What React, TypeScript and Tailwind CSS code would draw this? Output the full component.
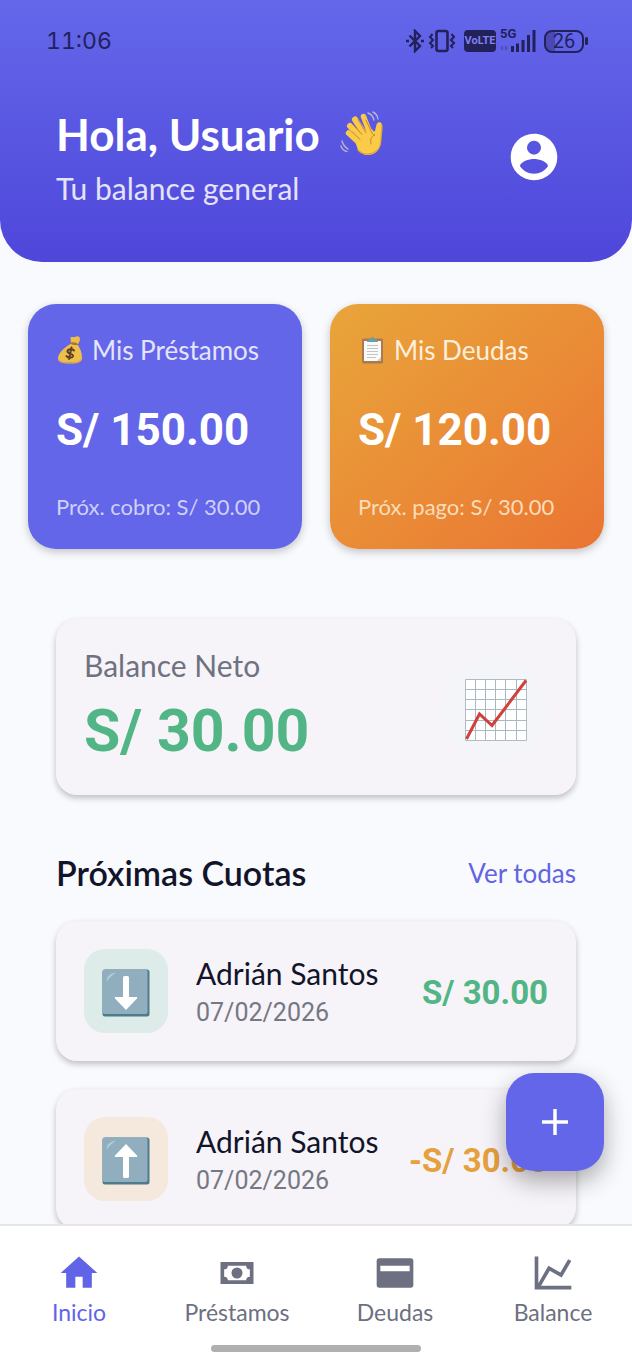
import React, { useState } from 'react';

type IconProps = { className?: string };

const TEXT = "font-['Lato','Open_Sans',sans-serif]";
const NUM = "font-['Roboto','Liberation_Sans',sans-serif]";

const WaveEmoji: React.FC<IconProps> = ({ className }) => (
  <svg viewBox="0 0 44 46" className={className} aria-hidden="true" fill="none" strokeLinecap="round">
    <g stroke="#f9cb46">
      <path d="M10 15l13 14" strokeWidth="6" />
      <path d="M8.500 22l13 12" strokeWidth="5.500" />
      <path d="M15 8.500l12 18" strokeWidth="6" />
      <path d="M23.500 5.500l7 18" strokeWidth="5.500" />
    </g>
    <path d="M14 27l7-6 11-3c1 2 2 3 3 2 1-3 1-7 3-8.500 2-1 4 0 4 3 0 5-1 9-1 14 0 9-5 15-12 15.500-5 .4-8-2-11-5z" fill="#f9cb46" />
    <path d="M13 13.500l9 10M18 8.500l8 13M12 20.500l8 8M26 9l5 11c1.500 3 2 4 4 4-4 1-5 5-4 9" stroke="#c9853a" strokeWidth="1" />
    <path d="M42 15c0 6-1 8-1 13 0 9-5 14-12 15-4 .5-8-1-11-4" stroke="#e2a23c" strokeWidth="1.300" />
    <g stroke="#b5b5cf" strokeWidth="1.400">
      <path d="M28 2c3 1 5 3 6 7M33 1c3 1.500 4.500 4 5 7M2 30c1 4 3 6 6 8M1 35c1 3 3 5 6 5.500" />
    </g>
  </svg>
);

const MoneyBagEmoji: React.FC<IconProps> = ({ className }) => (
  <svg viewBox="0 0 28 28" className={className} aria-hidden="true" fill="none">
    <path d="M14.500 1.500c2-1.200 3 .2 4.500-.6 1.500-.7 3-.8 4.300.2.800.700.300 1.700.6 2.600.200 1-.700 1.500-.9 2.500L22 8.500l-7-1.300z" fill="#efbd45" />
    <path d="M14.500 8C9 11 2 17 2 22.500 2 26 5 27.500 14 27.500s12-1.500 12-5.500c0-5-1.500-9-4.500-13.500z" fill="#efbf4c" />
    <path d="M14 7c2-1.200 6.500-.8 8.500 1.500-2 1-6.500.7-8.500-1.500z" fill="#a8742d" />
    <path d="M3 23.500c1 2.500 5 3 11 3s10.500-.6 11.500-3.500" stroke="#d9a23a" strokeWidth="1" />
    <path d="M18 14.500c-1.200-1.400-5.800-1.800-6.600.5-.8 2.700 6.300 2.500 5.600 5.300-.7 2.200-5 1.700-6.500-.2M15.500 11.500l-2.500 11.500" stroke="#5c4026" strokeWidth="2" strokeLinecap="round" />
  </svg>
);

const ClipboardEmoji: React.FC<IconProps> = ({ className }) => (
  <svg viewBox="0 0 28 28" className={className} aria-hidden="true">
    <rect x="4" y="2.500" width="21" height="25" rx="1.500" fill="#a97a50" />
    <path d="M6 5h17v20H6z" fill="#fafafa" />
    <path d="M19 25l4-4v4z" fill="#c9c9c9" />
    <path d="M9 9.500h11M9 12.500h11M9 15.500h11M9 18.500h11M9 21.500h9" stroke="#c4c4c4" strokeWidth="1" />
    <path d="M9 6c0-2 1.500-3 3.500-3a2 2 0 0 1 4 0c2 0 3.500 1 3.500 3z" fill="#6c9fa5" />
  </svg>
);

const ChartEmoji: React.FC<IconProps> = ({ className }) => (
  <svg viewBox="0 0 62 62" className={className} aria-hidden="true">
    <path d="M.5.5h61v61H.5z" fill="#fff" stroke="#aebcc4" />
    <path d="M10.500 1v60M20.500 1v60M30.500 1v60M40.500 1v60M51.500 1v60M1 10.500h60M1 20.500h60M1 30.500h60M1 41.500h60M1 51.500h60" stroke="#a9b9c2" strokeWidth="1" />
    <path d="M1.500 60L14.500 35 27 46.500 61 1.500" fill="none" stroke="#cf413a" strokeWidth="3" />
  </svg>
);

const ArrowEmoji: React.FC<IconProps & { up?: boolean }> = ({ className, up }) => (
  <svg viewBox="0 0 48 48" className={className} aria-hidden="true">
    <rect x=".5" y=".5" width="47" height="47" rx="2.500" fill="#4f7c8c" />
    <rect x=".5" y=".5" width="45" height="44.500" rx="2" fill="#90aebd" />
    <path d="M4.500 13c0-5 3-8.500 9.500-9.500-4 3-7 5-9.500 9.500z" fill="#b5d0dc" />
    <path
      d={up ? 'M24 7l11 11.500c.6.800.200 1.500-.7 1.500H27v19.500a1.500 1.500 0 0 1-1.500 1.500h-3a1.500 1.500 0 0 1-1.500-1.500V20h-7.300c-.9 0-1.300-.7-.7-1.500z' : 'M24 41l11-11.500c.6-.8.200-1.500-.7-1.500H27V8.500A1.500 1.500 0 0 0 25.500 7h-3A1.500 1.500 0 0 0 21 8.500V28h-7.300c-.9 0-1.300.7-.7 1.500z'}
      fill="#fff"
    />
  </svg>
);

const StatusIcons: React.FC = () => (
  <div className="flex items-center gap-2 text-[#22215a]">
    <svg viewBox="0 0 18 24" className="h-6 w-[18px]" fill="none" stroke="currentColor" strokeWidth="2.400" aria-hidden="true">
      <path d="M3.500 6.500L14 17l-5 5V2l5 5L3.500 17.500" />
      <path d="M0 12h3M15 12h3" strokeWidth="2.600" />
    </svg>
    <svg viewBox="0 0 28 24" className="-ml-1 h-6 w-7" fill="none" stroke="currentColor" strokeWidth="2.600" aria-hidden="true">
      <rect x="8.500" y="2" width="11" height="20" rx="2" />
      <path d="M4.500 5L2 8l3 3-3 3 3 3-2 2M23.500 5L26 8l-3 3 3 3-3 3 2 2" strokeWidth="2" />
    </svg>
    <span className={`${NUM} -mr-1 flex h-[22px] w-8 items-center justify-center rounded-sm bg-[#22215a] text-[11px] font-bold text-[#8080f0]`}>VoLTE</span>
    <div className="relative h-6 w-9">
      <span className={`${NUM} absolute -top-1 left-0 text-[13px] leading-[18px] font-bold`}>5G</span>
      <svg viewBox="0 0 36 24" className="h-6 w-9" aria-hidden="true">
        <path d="M11 17h3v6h-3zM16 14.500h3V23h-3zM21.500 11h3v12h-3zM27 6h3v17h-3zM32.500 1h3v22h-3z" fill="currentColor" />
        <path d="M0 19l3-3v6zM8 19l-3-3v6z" fill="currentColor" opacity=".3" />
      </svg>
    </div>
    <div className="flex items-center gap-px">
      <span className={`${NUM} flex h-[23px] w-10 items-center justify-center rounded-lg border-2 border-[#22215a] bg-linear-to-r from-[#4a49b4] from-25% to-transparent to-25% text-[20px]`}>26</span>
      <span className="h-2 w-[3px] rounded-sm bg-[#22215a]" />
    </div>
  </div>
);

const PATHS = {
  account: 'M12,19.2C9.5,19.2 7.29,17.92 6,16C6.03,14 10,12.9 12,12.9C14,12.9 17.97,14 18,16C16.71,17.92 14.5,19.2 12,19.2M12,5A3,3 0 0,1 15,8A3,3 0 0,1 12,11A3,3 0 0,1 9,8A3,3 0 0,1 12,5M12,2A10,10 0 0,0 2,12A10,10 0 0,0 12,22A10,10 0 0,0 22,12C22,6.47 17.5,2 12,2Z',
  home: 'M10,20V14H14V20H19V12H22L12,3L2,12H5V20H10Z',
  cash: 'M3,6H21V18H3V6M12,9A3,3 0 0,1 15,12A3,3 0 0,1 12,15A3,3 0 0,1 9,12A3,3 0 0,1 12,9M7,8A2,2 0 0,1 5,10V14A2,2 0 0,1 7,16H17A2,2 0 0,1 19,14V10A2,2 0 0,1 17,8H7Z',
  card: 'M3.500,4H20.500A1.500,1.500 0 0,1 22,5.500V18.500A1.500,1.500 0 0,1 20.500,20H3.500A1.500,1.500 0 0,1 2,18.500V5.500A1.500,1.500 0 0,1 3.500,4M4,8V11H20V8H4Z',
  chart: 'M16,11.78L20.24,4.45L21.97,5.45L16.74,14.5L10.23,10.75L5.46,19H22V21H2V3H4V17.54L9.5,8L16,11.78Z',
};

const Icon: React.FC<IconProps & { name: keyof typeof PATHS }> = ({ name, className }) => (
  <svg viewBox="0 0 24 24" className={className} fill="currentColor" fillRule="evenodd" aria-hidden="true">
    <path d={PATHS[name]} />
  </svg>
);

const cuotas = [
  { id: 1, name: 'Adrián Santos', date: '07/02/2026', amount: 'S/ 30.00', pago: false },
  { id: 2, name: 'Adrián Santos', date: '07/02/2026', amount: '-S/ 30.00', pago: true },
];

const tabs: { label: string; icon: keyof typeof PATHS }[] = [
  { label: 'Inicio', icon: 'home' },
  { label: 'Préstamos', icon: 'cash' },
  { label: 'Deudas', icon: 'card' },
  { label: 'Balance', icon: 'chart' },
];

export default function App() {
  const [activeTab, setActiveTab] = useState('Inicio');

  return (
    <div className={`${TEXT} flex h-screen flex-col bg-[#f9fafd] text-[#12142a]`}>
      <div className="relative min-h-0 flex-1">
        <div className="h-full overflow-y-auto [scrollbar-width:none]">
          <header className="rounded-b-[42px] bg-linear-to-b from-[#6467ea] to-[#4f46da] pb-14 text-white">
            <div className="flex h-[82px] items-center justify-between pr-11 pl-[46px]">
              <span className="font-['Inter',sans-serif] text-[23px] text-[#22215a] tabular-nums">11:06</span>
              <StatusIcons />
            </div>
            <div className="flex items-center justify-between pt-[26px] pr-[70px] pl-14">
              <div>
                <h1 className="flex items-center gap-5 text-[44px] leading-[52px] font-bold">
                  Hola, Usuario <WaveEmoji className="h-[46px] w-11" />
                </h1>
                <p className="mt-2.5 text-[30px] leading-9 text-[#e4e3fa]">Tu balance general</p>
              </div>
              <button type="button" aria-label="Mi cuenta">
                <Icon name="account" className="h-14 w-14" />
              </button>
            </div>
          </header>

          <section className="mt-[42px] grid grid-cols-2 gap-7 px-7">
            <div className="rounded-[28px] bg-[#6366e8] p-7 shadow-[0_3px_8px_rgba(0,0,0,0.22)]">
              <h2 className="flex items-center gap-2 text-[26px] leading-9 whitespace-nowrap text-[#e4e4fb]">
                <MoneyBagEmoji className="h-7 w-7" /> Mis Préstamos
              </h2>
              <p className={`${NUM} mt-9 text-[44px] leading-[52px] font-bold text-white`}>S/ 150.00</p>
              <p className="mt-[37px] text-[22px] leading-7 whitespace-nowrap text-[#cfd0f8]">Próx. cobro: S/ 30.00</p>
            </div>
            <div className="rounded-[28px] bg-linear-to-br from-[#e8a53a] to-[#ea7433] p-7 shadow-[0_3px_8px_rgba(0,0,0,0.22)]">
              <h2 className="flex items-center gap-2 text-[26px] leading-9 whitespace-nowrap text-[#fcefdc]">
                <ClipboardEmoji className="h-7 w-7" /> Mis Deudas
              </h2>
              <p className={`${NUM} mt-9 text-[44px] leading-[52px] font-bold text-white`}>S/ 120.00</p>
              <p className="mt-[37px] text-[22px] leading-7 whitespace-nowrap text-[#fbdcb8]">Próx. pago: S/ 30.00</p>
            </div>
          </section>

          <section className="mx-14 mt-[70px] flex items-center justify-between rounded-[21px] bg-[#f6f3f9] p-7 shadow-[0_3px_6px_rgba(0,0,0,0.24)]">
            <div>
              <h2 className="text-[30px] leading-9 text-[#6e7280]">Balance Neto</h2>
              <p className={`${NUM} mt-3 text-[59px] leading-[72px] font-bold text-[#52b585]`}>S/ 30.00</p>
            </div>
            <div className="flex h-[105px] w-[105px] items-center justify-center rounded-full bg-[#f3f5f8] pt-1.5">
              <ChartEmoji className="h-[62px] w-[62px]" />
            </div>
          </section>

          <section className="mt-[58px] px-14 pb-7">
            <div className="mb-7 flex items-center justify-between">
              <h2 className="text-[34px] leading-10 font-semibold">Próximas Cuotas</h2>
              <a href="#cuotas" className="text-[26px] leading-8 text-[#6264e4]">Ver todas</a>
            </div>
            <ul id="cuotas" className="flex flex-col gap-7">
              {cuotas.map(c => (
                <li key={c.id} className="flex items-center rounded-[21px] bg-[#f6f3f9] p-7 shadow-[0_3px_6px_rgba(0,0,0,0.24)]">
                  <div className={`flex h-[84px] w-[84px] shrink-0 items-center justify-center rounded-[21px] pt-1 ${c.pago ? 'bg-[#f5e9de]' : 'bg-[#ddebe9]'}`}>
                    <ArrowEmoji up={c.pago} className="h-12 w-12" />
                  </div>
                  <div className="ml-7 flex-1 pt-0.5 whitespace-nowrap">
                    <p className="text-[30px] leading-9">{c.name}</p>
                    <p className={`${NUM} mt-1.5 text-[25px] leading-8 text-[#757882]`}>{c.date}</p>
                  </div>
                  <p className={`${NUM} pt-1 text-[33px] leading-10 font-bold whitespace-nowrap ${c.pago ? 'text-[#e6a03c]' : 'text-[#52b585]'}`}>{c.amount}</p>
                </li>
              ))}
            </ul>
          </section>
        </div>

        <button
          type="button"
          aria-label="Agregar"
          className="absolute right-7 bottom-[53px] flex h-[98px] w-[98px] items-center justify-center rounded-[28px] bg-[#6366e8] text-white shadow-[0_10px_24px_rgba(0,0,0,0.32)]"
        >
          <svg viewBox="0 0 26 26" className="h-[26px] w-[26px]" fill="none" stroke="currentColor" strokeWidth="3.500" aria-hidden="true">
            <path d="M13 0v26M0 13h26" />
          </svg>
        </button>
      </div>

      <nav className="border-t-2 border-[#e6e6ea] bg-white pb-4">
        <div className="grid grid-cols-4 pt-[25px]">
          {tabs.map(tab => (
            <button
              key={tab.label}
              type="button"
              onClick={() => setActiveTab(tab.label)}
              className={`flex flex-col items-center gap-[3px] ${activeTab === tab.label ? 'text-[#6264e8]' : 'text-[#6c7080]'}`}
            >
              <Icon name={tab.icon} className="h-11 w-11" />
              <span className="text-[23px] leading-7">{tab.label}</span>
            </button>
          ))}
        </div>
        <div className="mx-auto mt-[19px] h-[7px] w-1/3 rounded-full bg-[#b0b0b0]" />
      </nav>
    </div>
  );
}
